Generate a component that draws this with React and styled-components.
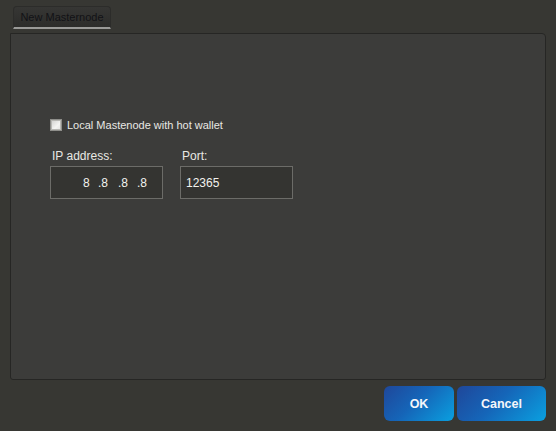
import React from 'react';
import styled, { createGlobalStyle } from 'styled-components';

const Global = createGlobalStyle`
    html, body {
        margin:0;
        padding:0;
        background:#373733;
    }
    body {
        font-family:"Liberation Sans", Arial, sans-serif;
        font-size:12px;
    }
`;

const Page = styled.div`
    width:556px;
    height:431px;
    background:#373733;
    display:flex;
    flex-direction:column;
    box-sizing:border-box;
    padding:6px 10px 0 10px;
`;

const TabBar = styled.div`
    display:flex;
    padding-left:3px;
    height:24px;
`;

const Tab = styled.div`
    width:98px;
    height:23px;
    box-sizing:border-box;
    background:linear-gradient(#363634, #2c2c2a);
    border:1px solid #2c2c2a;
    border-bottom:2px solid #9a9a98;
    border-radius:4px 4px 0 0;
    color:#121216;
    font-size:11px;
    display:flex;
    align-items:center;
    justify-content:center;
    padding-bottom:1px;
`;

const Panel = styled.div`
    margin-top:3px;
    width:536px;
    height:347px;
    box-sizing:border-box;
    background:#3c3c3a;
    border:1px solid #262624;
    border-radius:0 4px 3px 3px;
    padding:84px 0 0 39px;
    display:flex;
    flex-direction:column;
`;

const CheckRow = styled.label`
    display:flex;
    align-items:center;
    gap:5px;
    color:#e8e8e4;
    font-size:11px;
    height:14px;
`;

const Box = styled.span`
    width:12px;
    height:12px;
    box-sizing:border-box;
    border:1px solid #8e8e8a;
    background:linear-gradient(135deg, #cfcfcd, #f4f4f2 60%, #e2e2e0);
    box-shadow:inset 0 0 0 1px #b8b8b4;
`;

const Fields = styled.div`
    display:flex;
    gap:17px;
    margin-top:17px;
`;

const Field = styled.div`
    display:flex;
    flex-direction:column;
`;

const Label = styled.div`
    color:#e8e8e4;
    font-size:12px;
    height:17px;
    padding-left:2px;
`;

const Input = styled.div`
    width:113px;
    height:33px;
    box-sizing:border-box;
    border:1px solid #6c6c68;
    background:#343431;
    color:#f2f2ee;
    font-size:12px;
    display:flex;
    align-items:center;
    padding-left:${p => p.indent || 5}px;
`;

const Octet = styled.span`
    width:${p => p.w}px;
`;

const Footer = styled.div`
    display:flex;
    justify-content:flex-end;
    gap:3px;
    margin-top:6px;
`;

const Button = styled.button`
    width:${p => p.w}px;
    height:35px;
    border:none;
    border-radius:6px;
    background:linear-gradient(135deg, #1f479a 0%, #1565b8 45%, #0aa0e0 100%);
    color:#f4f6fa;
    font-family:"Liberation Sans", Arial, sans-serif;
    font-weight:bold;
    font-size:12.5px;
    padding:0;
`;

const octets = [['8', 15], ['.8', 20], ['.8', 19], ['.8', 14]];

export default function App() {
    return <Page>
        <Global />
        <TabBar>
            <Tab>New Masternode</Tab>
        </TabBar>
        <Panel>
            <CheckRow>
                <Box />
                <span>Local Mastenode with hot wallet</span>
            </CheckRow>
            <Fields>
                <Field>
                    <Label>IP address:</Label>
                    <Input indent={32}>
                        {octets.map(([t, w], i) => <Octet key={i} w={w}>{t}</Octet>)}
                    </Input>
                </Field>
                <Field>
                    <Label>Port:</Label>
                    <Input>12365</Input>
                </Field>
            </Fields>
        </Panel>
        <Footer>
            <Button w={70}>OK</Button>
            <Button w={89}>Cancel</Button>
        </Footer>
    </Page>;
}
